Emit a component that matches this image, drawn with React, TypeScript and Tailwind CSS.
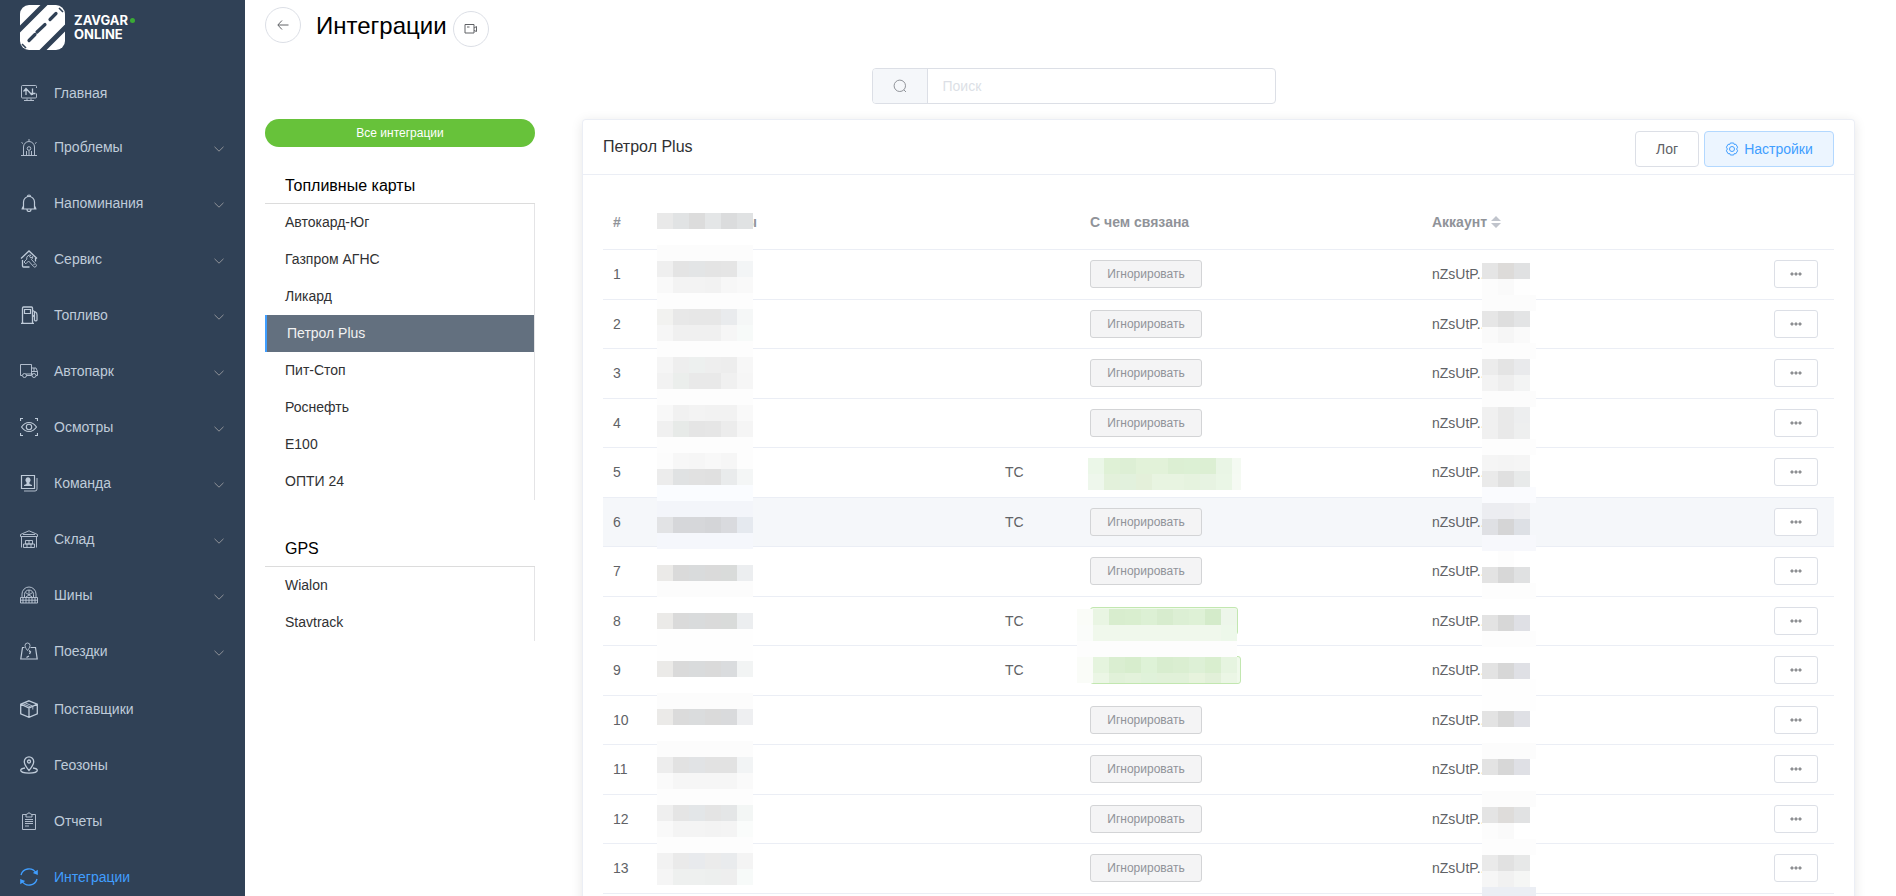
import { useState } from 'react'
import type { ReactNode } from 'react'
import clsx from 'clsx'

interface MenuItem {
  title: string
  icon: ReactNode
  nested?: boolean
}

interface CardRow {
  id: number
  type?: string
  linked?: boolean
}

const menu: MenuItem[] = [
  {
    title: 'Главная',
    icon: (
      <>
        <path d="M16.5 9.5V13a1 1 0 0 1-1 1h-13a1 1 0 0 1-1-1V2.500a1 1 0 0 1 1-1h13a1 1 0 0 1 1 1V4" />
        <path d="M4 16.500h10M7 14.500v2M11 14.500v2" />
        <path d="M6 11V5M3.500 7.500 6 4.500l6 6.500M12.500 4.500v6.500M10 9.500h5.500" strokeWidth="1.300" />
      </>
    ),
  },
  {
    title: 'Проблемы',
    nested: true,
    icon: (
      <>
        <path d="M1 17.500h16M3.500 17V9a5.500 5.500 0 0 1 11 0v8" />
        <circle cx="9" cy="10.500" r="1.800" />
        <path d="M9 12.500V17M6.500 13v4M11.500 13v4M9 1v2M1.500 4.500l1.500 1M16.500 4.500l-1.500 1" />
      </>
    ),
  },
  {
    title: 'Напоминания',
    nested: true,
    icon: (
      <path
        d="M1.500 15h15M3.500 15V8a5.500 5.500 0 0 1 11 0v7M2 15l1.500-3M16 15l-1.500-3M7.500 2.500a1.500 1.500 0 0 1 3 0M7 15.500a2 2 0 0 0 4 0"
        strokeWidth="1.200"
      />
    ),
  },
  {
    title: 'Сервис',
    nested: true,
    icon: (
      <>
        <path d="M2.500 10V16a1 1 0 0 0 1 1h6M1 8.500 9 1l8 7.500M15.500 8v3.500" strokeWidth="1.300" />
        <path d="M11 5.200a3.300 3.300 0 0 0-4.200 4L4 12l1.800 1.800 2.800-2.800 5 5.500a1.500 1.500 0 0 0 2.400-2L11.500 9.500a3.300 3.300 0 0 0 1.300-3L11 8 9.500 6.800z" />
        <path d="M13.500 14l1 1" />
      </>
    ),
  },
  {
    title: 'Топливо',
    nested: true,
    icon: (
      <>
        <path d="M2.500 17V2a1 1 0 0 1 1-1h8a1 1 0 0 1 1 1v15M1 17.500h13" strokeWidth="1.300" />
        <path d="M4.500 3.500h6v4h-6zM12.500 4.500l3 1.500c1 .5 1.500 1.500 1.500 3V14a1.300 1.300 0 0 1-2.500 0v-3l-2-2M14.500 6v5" strokeWidth="1.200" />
        <path d="M2.500 15v2h1" />
      </>
    ),
  },
  {
    title: 'Автопарк',
    nested: true,
    icon: (
      <>
        <path d="M2 13.500H.5v-11h11v11h-5M11.500 6H16l1.500 3.500v4H16M12 9.500h5.500M14 6v3.500M6 12h7" />
        <circle cx="4.500" cy="13.500" r="2" />
        <circle cx="14" cy="13.500" r="2" />
      </>
    ),
  },
  {
    title: 'Осмотры',
    nested: true,
    icon: (
      <>
        <path d="M.5 3V.5H3M15 .5h2.500V3M17.500 15v2.500H15M3 17.500H.5V15" strokeWidth="1.200" />
        <path d="M1.500 9c2-3 4.500-4.500 7.500-4.500S14.500 6 16.500 9c-2 3-4.500 4.500-7.500 4.500S3.500 12 1.500 9z" strokeWidth="1.100" />
        <circle cx="9" cy="9" r="2.700" strokeWidth="1.100" />
      </>
    ),
  },
  {
    title: 'Команда',
    nested: true,
    icon: (
      <>
        <path d="M1.500 1.500h13v13h-13z" strokeWidth="1.200" />
        <path d="M4 17h11a2 2 0 0 0 2-2V4" />
        <path d="M8 3.200a2.800 2.800 0 0 1 1.500 5V10l2.500 1v1H4v-1l2.500-1V8.200A2.800 2.800 0 0 1 8 3.200z" fill="currentColor" stroke="none" />
      </>
    ),
  },
  {
    title: 'Склад',
    nested: true,
    icon: (
      <>
        <path d="M.5 6.500V4.500L9 .8l8.500 3.700v2zM1.500 7v10.500M16.500 7v10.500M3 4.500h12" />
        <path d="M5.500 10.500h7v3.500h-7zM9 10.500V14M3.500 14h11v3.500h-11zM7 14v3.500M11 14v3.500" />
      </>
    ),
  },
  {
    title: 'Шины',
    nested: true,
    icon: (
      <>
        <path d="M2 11V8a7 7 0 0 1 14 0v3" />
        <path d="M4.500 11V8.500a4.500 4.500 0 0 1 9 0V11M9 4v4M5.500 6.500 12 11M12.500 6.500 6 11" />
        <path d="M.5 11.500h17v5.500H.5zM.5 14.200h17M3 11.500V17M6 11.500V17M9 11.500V17M12 11.500V17M15 11.500V17" />
      </>
    ),
  },
  {
    title: 'Поездки',
    nested: true,
    icon: (
      <>
        <path d="M4.500 5.500h-2L.8 17h16.400L15.500 5.500h-5" strokeWidth="1.200" />
        <path d="M7.500 1a2.500 2.500 0 0 1 2.500 2.500c0 2-2.500 5-2.500 5S5 5.500 5 3.500A2.500 2.500 0 0 1 7.500 1z" />
        <path d="M9 8.500l1.500 1.500-1 2M9 14l-2.500 1.500" strokeWidth="1.300" />
      </>
    ),
  },
  {
    title: 'Поставщики',
    icon: (
      <>
        <path d="m9 .8 8.300 3.400v9.600L9 17.300.7 13.800V4.200zM.7 4.200 9 8l8.300-3.800M9 8v9.300" strokeWidth="1.300" />
        <path d="m4.500 2.500 8.300 3.700v3.300M2.500 3.500 11 7.200" />
      </>
    ),
  },
  {
    title: 'Геозоны',
    icon: (
      <>
        <path d="M9 .8a4.700 4.700 0 0 1 4.700 4.700C13.700 9 9 14.500 9 14.500S4.300 9 4.300 5.500A4.700 4.700 0 0 1 9 .8z" strokeWidth="1.300" />
        <circle cx="9" cy="5.500" r="1.500" strokeWidth="1.300" />
        <path d="M5 12c-2.500.3-4.300 1.200-4.300 2.300 0 1.600 3.700 2.900 8.300 2.900s8.300-1.300 8.300-2.900c0-1.100-1.800-2-4.300-2.300" strokeWidth="1.300" />
      </>
    ),
  },
  {
    title: 'Отчеты',
    icon: (
      <>
        <path d="M6 2.500H2.500v15h13v-15H12" />
        <path d="M6 2.500 7.500 2C7.500.5 10.500.5 10.500 2l1.500.5V5H6zM5 7.500h8M5 9.500h8M5 11.500h8M5 14h4" />
      </>
    ),
  },
  {
    title: 'Интеграции',
    icon: (
      <>
        <path d="M1 7a8.200 8.200 0 0 1 15-2M17 11a8.200 8.200 0 0 1-15 2" strokeWidth="1.300" />
        <path d="M17.800 1.800V7l-5-2zM.2 16.200V11l5 2z" fill="currentColor" stroke="none" />
      </>
    ),
  },
]

const groups = [
  {
    title: 'Топливные карты',
    items: ['Автокард-Юг', 'Газпром АГНС', 'Ликард', 'Петрол Plus', 'Пит-Стоп', 'Роснефть', 'Е100', 'ОПТИ 24'],
  },
  { title: 'GPS', items: ['Wialon', 'Stavtrack'] },
]

const rows: CardRow[] = [
  { id: 1 },
  { id: 2 },
  { id: 3 },
  { id: 4 },
  { id: 5, type: 'ТС', linked: true },
  { id: 6, type: 'ТС' },
  { id: 7 },
  { id: 8, type: 'ТС', linked: true },
  { id: 9, type: 'ТС', linked: true },
  { id: 10 },
  { id: 11 },
  { id: 12 },
  { id: 13 },
]

// Pixelated masks over private data: one string per 16px line.
// A single colour fills the whole line, "-" leaves it clear.
const nameMask = [
  'e9e9e9 e1e3e4 dcdcdc e4e6e7 dbdcdd e0e2e3',
  '-',
  'fcfcfc',
  'efefef e4e4e4 e3e5e6 e4e4e4 e5e5e5 f3f5f6',
  'f9f9f9 f3f3f3 f3f3f3 f2f2f2 f7f7f7 f9f9f9',
  'fdfdfd',
  'f2f2f0 e8e8e8 e7e7e7 e7e7e7 e9ebed f5f7f7',
  'f6f6f6 f0f0f0 f0f0f0 f0f0f0 f6f6f6 f7faf9',
  'fdfdfd',
  'f5f5f5 eeeeee edf0ef eeeeee ededed f7f7f7',
  'f2f2f2 ebeeec e9e9e9 e9e9e9 f0f0f0 f6f6f6',
  'fdfdfd',
  'f8f8f8 f1f1f1 f3f3f3 f2f2f2 f2f2f2 f9f9f9',
  'f0f0f0 e7eae8 e5e5e5 e6e6e6 ececec f5f5f5',
  'fdfdfd',
  'fcfcfc f7f7f7 f6f6f6 f8f8f8 f6f6f6 fdfdfd',
  'ececec e0e2e3 e1e1e1 e0e0e0 e9ebec f4f6f6',
  'fafcff',
  'f3f5fa',
  'e2e3e5 d6d7da d6d7da d4d5d8 d9dade e5e9ef',
  'f5f7fc',
  'ffffff',
  'ebeae8 dadada d9dbdc dadada d9dbda eceef0',
  'fcfcfc',
  'ffffff',
  'ebeae8 dadada d9dbdc dadada d9dbda eceef0',
  'fefefe',
  'fefefe',
  'ebeae8 dadada d9dbdc dadada dadcde f2f4f4',
  'ffffff',
  'fcfcfc',
  'ebeae8 dbdbdb dadcdd dadada d9dadc eeeff1',
  'ffffff',
  'fcfcfc',
  'ededed e2e2e2 e1e3e5 e2e2e2 e2e2e2 f2f4f5',
  'fafafa f6f6f6 f6f6f6 f6f6f6 f6f6f6 fafafa',
  'fdfdfd',
  'efefef e5e5e5 e3e6e8 e4e4e4 e4e6e7 f3f6f5',
  'f9f9f9 f4f4f4 f4f4f4 f3f3f3 f4f4f4 fafcfb',
  'fdfdfd',
  'f2f2f2 eaeaea e8eaed ebebeb e9ebed f4f4f4',
  'f5f5f5 eef0ef eef0ef edefee eeeeee f7faf9',
]

const accountMask = [
  'e5e5e5 dddbd9 e0e1e2',
  'fcfcfc fafafa fefefe',
  'fcfcfc',
  'e6e6e6 dedede e3e4e5',
  'fafafa f6f6f6 fafafa',
  'fdfdfd',
  'ececec e4e4e4 e9eaec',
  'f3f3f3 eeeeee f3f4f4',
  'fcfcfc',
  'f0f0f0 e9e9e9 edeeef',
  'f0f0f0 e9e9e9 eeefef',
  'fdfdfd',
  'f5f5f5 f4f4f4 f5f5f5',
  'eaeaea e0e0e0 e8eaea',
  'fafbfe',
  'ecedf1 ecedf1 eeeff2',
  'dfe0e4 d5d5d6 dde0e5',
  'f7f8fc',
  'ffffff fdfdfd ffffff',
  'e3e3e3 d7d7d7 e0e1e2',
  'fdfdfd',
  'ffffff',
  'e3e3e3 d7d7d7 dfe0e5',
  'fdfdfd',
  'ffffff',
  'e3e3e3 d7d7d7 dfe0e5',
  'fefefe',
  'fefefe',
  'e3e3e3 d7d7d7 dfe0e5',
  'ffffff',
  'fcfcfc',
  'e3e3e3 d7d7d7 dfe0e5',
  'ffffff',
  'fcfcfc',
  'e4e4e4 dedcda e1e2e3',
  'fcfcfc fafafa ffffff',
  'fdfdfd',
  'eaeaea e1e1e1 e7e8e8',
  'f6f6f6 f1f1f1 f5f6f5',
  'ebeef4',
]

const shortTagMask = [
  'ebf7e8 dff1d6 ddefd5 e2f2d9 e2f2d9 dcefd3 dcf0d4 dcefd3 e9f5e5 f4faf2',
  'eef7ec e3f1db e2f1dd e4f0da e8f4e1 e8f4e1 e6f3df e7f3e2 eaf6e6 f5faf3',
]

const longTagMask = [
  'fafcf8 e9f5e3 d8edce d9eecf dcf0d4 d7ecce dcefd4 def1d6 d4ebca edf6ea',
  'fafcfa f0f8ec f0f8ec f0f8ec f0f8ec f0f8ec f0f8ec f0f8ec f0f8ec edf8ea',
  'fdfdfd',
  'fafcf8 e5f4de daeed1 d7edcd def2d7 d8edcf daeed1 ddf0d6 d9eecf e6f4e0',
  'fafcf8 ebf6e5 e1f1d9 e3f2db e0f2da e1f1d9 e1f1d9 e7f3dd e2f0d9 ebf6e5',
]

function Mask({ lines, className }: { lines: string[]; className: string }) {
  return (
    <div className={clsx('pointer-events-none absolute z-10 overflow-hidden', className)} aria-hidden="true">
      {lines.map((line, i) => (
        <div key={i} className="flex h-4">
          {line !== '-' &&
            line.split(' ').map((color, j, all) => (
              <span
                key={j}
                className={all.length === 1 ? 'flex-1' : 'w-4 shrink-0'}
                style={{ backgroundColor: `#${color}` }}
              />
            ))}
        </div>
      ))}
    </div>
  )
}

function Logo() {
  return (
    <a href="#" className="flex h-[65px] items-start gap-[9px] pt-[5px] pl-5 text-white">
      <svg viewBox="0 0 45 45" className="size-[45px]" aria-hidden="true">
        <rect width="45" height="45" rx="9" fill="#fff" />
        <g stroke="#304156" fill="none">
          <path d="M-4 28 28-4M17 51l34-34" strokeWidth="5" />
          <path d="m36 8.500-6 6M25 19.500l-8 7.500M15 29.500l-6 6" strokeWidth="3.200" strokeLinecap="round" />
          <path d="m39 3 4 4M2 39l4 4" strokeWidth="1.600" />
        </g>
      </svg>
      <span className="flex flex-col pt-2 text-[13px] leading-[14px] font-bold">
        <span className="flex items-center gap-[2px]">
          ZAVGAR
          <span className="size-[5px] rounded-full bg-[#3aaa35]" />
        </span>
        <span>ONLINE</span>
      </span>
    </a>
  )
}

function Sidebar() {
  return (
    <aside className="w-[245px] shrink-0 bg-[#304156]">
      <div className="font-[Inter,sans-serif]">
        <Logo />
      </div>
      <nav>
        {menu.map((item) => (
          <a
            key={item.title}
            href="#"
            className={clsx(
              'flex h-14 items-center pr-[21px] pl-5 text-sm',
              item.nested && 'pb-1',
              item.title === 'Интеграции' ? 'text-[#409eff]' : 'text-[#bfcbd9]',
            )}
          >
            <svg viewBox="0 0 18 18" className="mr-4 size-[18px]" fill="none" stroke="currentColor" strokeWidth="0.900" aria-hidden="true">
              {item.icon}
            </svg>
            <span className="flex-1">{item.title}</span>
            {item.nested && (
              <svg viewBox="0 0 10 10" className="mt-[3px] size-[10px]" fill="none" stroke="#909399" aria-hidden="true">
                <path d="m.5 2.800 4.500 4.400 4.500-4.400" />
              </svg>
            )}
          </a>
        ))}
      </nav>
    </aside>
  )
}

function PageHeader() {
  return (
    <header className="flex h-10 items-start">
      <button
        type="button"
        aria-label="Назад"
        className="flex size-9 items-center justify-center rounded-full border border-[#dcdfe6] bg-white text-[#606266]"
      >
        <svg viewBox="0 0 12 12" className="size-3" fill="none" stroke="currentColor" aria-hidden="true">
          <path d="M11.500 6H1M5 1.500.8 6 5 10.500" />
        </svg>
      </button>
      <h1 className="ml-[15px] pt-px text-2xl leading-9 text-black">Интеграции</h1>
      <button
        type="button"
        aria-label="Видео"
        className="mt-1 ml-1.5 flex size-9 items-center justify-center rounded-full border border-[#dcdfe6] bg-white text-[#606266]"
      >
        <svg viewBox="0 0 14 12" className="h-3 w-[14px]" fill="none" stroke="currentColor" aria-hidden="true">
          <path d="M1 1.500h9v8.500H1zM3 4h2.500M10 5l2.500-1.500v5L10 7.500" />
        </svg>
      </button>
    </header>
  )
}

function SearchBox() {
  return (
    <div className="mt-[21px] flex justify-center pl-1.5">
      <div className="flex h-9 w-[404px] overflow-hidden rounded border border-[#dcdfe6]">
        <label htmlFor="search" className="flex w-[55px] items-center justify-center border-r border-[#dcdfe6] bg-[#f5f7fa]" aria-label="Поиск">
          <svg viewBox="0 0 14 14" className="size-[14px]" fill="none" stroke="#909399" aria-hidden="true">
            <circle cx="6.800" cy="6.800" r="5.700" />
            <path d="m10.800 10.800 2.200 2.200" />
          </svg>
        </label>
        <input
          id="search"
          type="text"
          placeholder="Поиск"
          className="min-w-0 flex-1 px-[15px] text-sm text-[#606266] outline-none placeholder:text-[#dcdfe6]"
        />
      </div>
    </div>
  )
}

function Integrations({ active, onSelect }: { active: string; onSelect: (name: string) => void }) {
  return (
    <section className="w-[270px] shrink-0">
      <button type="button" className="block h-7 w-full rounded-full bg-[#67c23a] text-xs text-white">
        Все интеграции
      </button>
      {groups.map((group) => (
        <div key={group.title} className="mb-[10px]">
          <h2 className="border-b border-[#dcdcdc] pt-[27px] pb-[5px] pl-5 text-base leading-6 text-black">{group.title}</h2>
          <ul className="border-r border-[#e4e4e6]">
            {group.items.map((name) => (
              <li key={name}>
                <button
                  type="button"
                  onClick={() => onSelect(name)}
                  className={clsx(
                    'block h-[37px] w-full pb-[2px] pl-5 text-left text-sm',
                    name === active ? 'border-l-2 border-[#409eff] bg-[#63707f] text-[#f2f2f2]' : 'text-[#303133]',
                  )}
                >
                  {name}
                </button>
              </li>
            ))}
          </ul>
        </div>
      ))}
    </section>
  )
}

function LinkCell({ row }: { row: CardRow }) {
  if (!row.linked) {
    return (
      <button type="button" className="block h-7 w-28 rounded-[3px] border border-[#d3d4d6] bg-[#f4f4f5] text-xs text-[#909399]">
        Игнорировать
      </button>
    )
  }
  return (
    <>
      <button
        type="button"
        aria-label="Связанное ТС"
        className={clsx(
          'block h-7 rounded-[3px] border border-[#c2e7b0] bg-[#f0f9eb]',
          row.id === 9 ? 'w-[151px]' : 'w-[148px]',
        )}
      />
      {row.id === 5 && <Mask lines={shortTagMask} className="top-[10px] left-2 w-[153px] bg-white" />}
      {row.id === 8 && <Mask lines={longTagMask} className="top-3 -left-[3px] h-[74px] w-40" />}
    </>
  )
}

function CardTable() {
  return (
    <table className="w-full table-fixed border-collapse text-left text-sm text-[#606266]">
      <colgroup>
        <col className="w-[50px]" />
        <col />
        <col className="w-[85px]" />
        <col />
        <col />
        <col className="w-[70px]" />
      </colgroup>
      <thead>
        <tr className="h-[54px] border-b border-[#ebeef5] text-[#909399]">
          <th className="px-[10px]">#</th>
          <th className="relative pl-[92px]">
            ы
            <Mask lines={nameMask} className="top-[18px] left-1 w-24" />
          </th>
          <th />
          <th className="px-[10px]">С чем связана</th>
          <th className="relative px-[10px]">
            <button type="button" className="flex items-center gap-1 font-bold">
              Аккаунт
              <svg viewBox="0 0 10 12" className="h-3 w-[10px]" fill="#c0c4cc" aria-hidden="true">
                <path d="M5 0l5 5H0zM5 12l5-5H0z" />
              </svg>
            </button>
            <Mask lines={accountMask} className="top-[68px] left-[60px] w-[54px]" />
          </th>
          <th />
        </tr>
      </thead>
      <tbody>
        {rows.map((row) => (
          <tr
            key={row.id}
            className={clsx('border-b border-[#ebeef5] odd:h-[50px] even:h-[49px]', row.id === 6 && 'bg-[#f5f7fa]')}
          >
            <td className="px-[10px]">{row.id}</td>
            <td />
            <td className="px-[10px]">{row.type}</td>
            <td className="relative px-[10px]">
              <LinkCell row={row} />
            </td>
            <td className="px-[10px]">nZsUtP..</td>
            <td className="px-[10px]">
              <button
                type="button"
                aria-label="Действия"
                className="flex h-7 w-11 items-center justify-center rounded-[3px] border border-[#dcdfe6] bg-white"
              >
                <svg viewBox="0 0 12 4" className="h-1 w-3" fill="none" stroke="#606266" aria-hidden="true">
                  <circle cx="2" cy="2" r="1.100" />
                  <circle cx="6" cy="2" r="1.100" />
                  <circle cx="10" cy="2" r="1.100" />
                </svg>
              </button>
            </td>
          </tr>
        ))}
      </tbody>
    </table>
  )
}

export default function App() {
  const [active, setActive] = useState('Петрол Plus')

  return (
    <div className="flex h-screen overflow-hidden bg-white font-['Liberation_Sans',Arial,sans-serif]">
      <Sidebar />
      <main className="flex min-w-0 flex-1 flex-col pt-[7px] pr-5 pl-5">
        <PageHeader />
        <SearchBox />
        <div className="mt-[15px] flex flex-1 gap-[47px] pr-[21px]">
          <Integrations active={active} onSelect={setActive} />
          <section className="min-w-0 flex-1 rounded-t border border-b-0 border-[#ebeef5] shadow-[0_2px_12px_rgba(0,0,0,0.1)]">
            <div className="flex h-[55px] items-center justify-between border-b border-[#ebeef5] px-5">
              <h2 className="text-base text-[#303133]">{active}</h2>
              <div className="flex gap-[5px] pt-1">
                <button type="button" className="h-9 w-16 rounded border border-[#dcdfe6] bg-white text-sm text-[#606266]">
                  Лог
                </button>
                <button
                  type="button"
                  className="flex h-9 w-[130px] items-center justify-center gap-[5px] rounded border border-[#b3d8ff] bg-[#ecf5ff] text-sm text-[#409eff]"
                >
                  <svg viewBox="0 0 14 14" className="size-[14px]" fill="none" stroke="currentColor" aria-hidden="true">
                    <path d="M5.300 1h3.400l.6 1.500 1.600-.2 1.700 2.900-1 1.800 1 1.800-1.700 2.900-1.600-.2-.6 1.500H5.300l-.6-1.500-1.600.2-1.700-2.900 1-1.800-1-1.800 1.700-2.900 1.600.2z" />
                    <circle cx="7" cy="7" r="2.500" />
                  </svg>
                  Настройки
                </button>
              </div>
            </div>
            <div className="p-5">
              <CardTable />
            </div>
          </section>
        </div>
      </main>
    </div>
  )
}
